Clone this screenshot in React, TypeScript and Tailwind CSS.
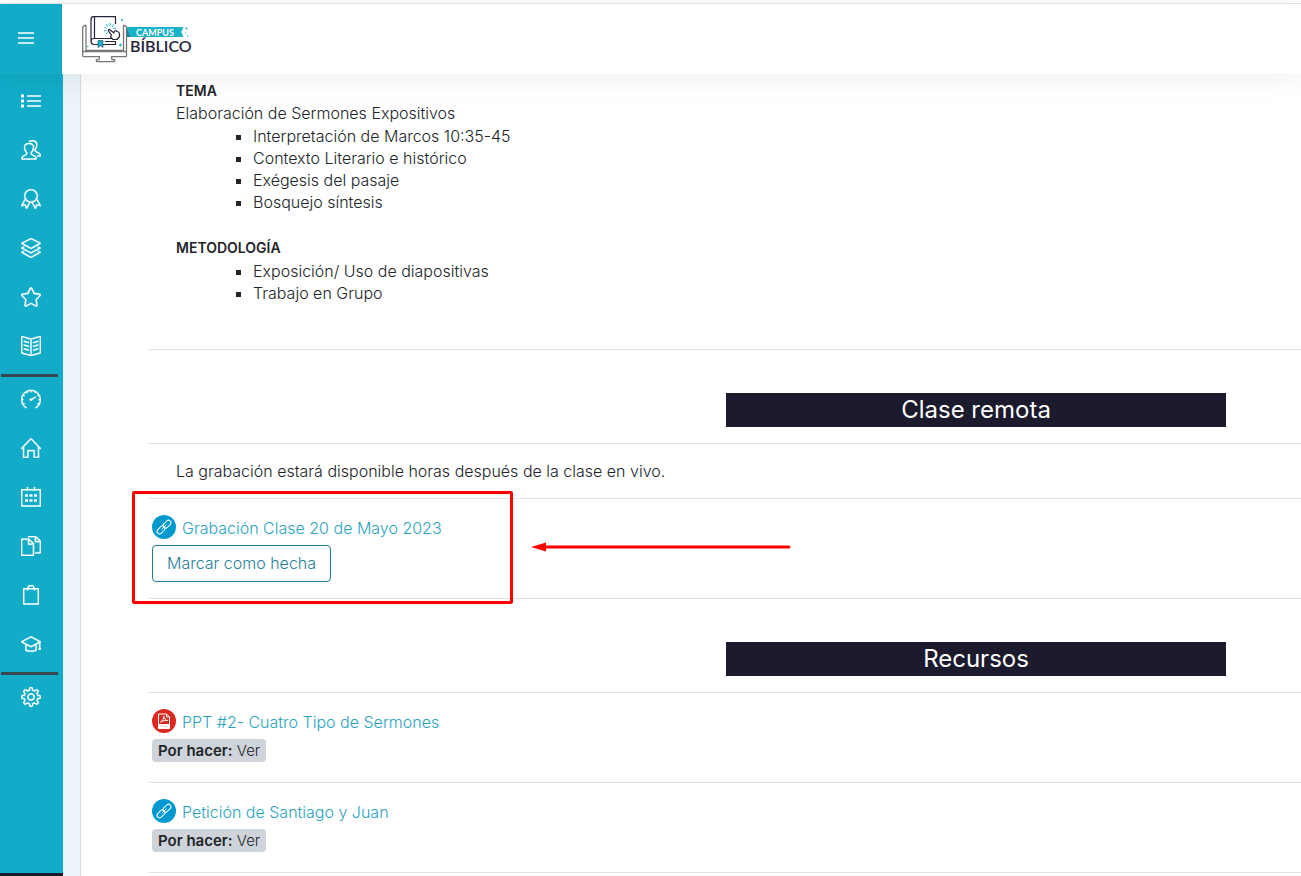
import type { ReactNode } from "react";
import { SlLayers, SlGraduation, SlSettings, SlStar, SlBookOpen, SlSpeedometer, SlHome, SlBadge, SlDocs } from "react-icons/sl";

type NavItem = { label: string; icon: ReactNode };

const slIcon = "size-5 stroke-current stroke-[16px]";

function Icon({ children }: { children: ReactNode }) {
    return (
        <svg viewBox="0 0 20 20" className="size-5" fill="none" stroke="currentColor" strokeWidth="1.5" strokeLinejoin="round">
            {children}
        </svg>
    );
}

const courseNav: NavItem[] = [
    {
        label: "Secciones",
        icon: (
            <Icon>
                <path d="M6 5h14M6 10h14M6 15h14" />
                <path d="M0 5h3M0 10h3M0 15h3" strokeWidth="3" />
            </Icon>
        ),
    },
    {
        label: "Participantes",
        icon: (
            <Icon>
                <path d="M1 19v-1.500c1-2 5-2 5-4.500C4 11 3.500 9 3.500 7.500 3.500 5 5.500 3.500 8 3.500s4.500 1.500 4.500 4c0 1.500-.5 3.500-2.500 5.500 0 2.500 4 2.500 5 4.500V19z" />
                <path d="M8 1.500C9 .9 10 .7 11.500.7c2.500 0 4.300 1.500 4.300 4.300 0 1.800-.8 3.500-2 4.800 0 2.700 4.500 2.700 5.500 4.700v1.500H16" />
            </Icon>
        ),
    },
    { label: "Insignias", icon: <SlBadge className={slIcon} /> },
    { label: "Competencias", icon: <SlLayers className={slIcon} /> },
    { label: "Calificaciones", icon: <SlStar className={slIcon} /> },
    { label: "Contenido", icon: <SlBookOpen className={slIcon} /> },
];

const siteNav: NavItem[] = [
    { label: "Tablero", icon: <SlSpeedometer className={slIcon} /> },
    { label: "Inicio del sitio", icon: <SlHome className={slIcon} /> },
    {
        label: "Calendario",
        icon: (
            <Icon>
                <path d="M.7 2.700h18.600v16.300H.7zM6.500 0v4M13.500 0v4" />
                <path d="M4 8.500h3M8.500 8.500h3M13 8.500h3M4 13.500h3M8.500 13.500h3M13 13.500h3" strokeWidth="2.600" />
            </Icon>
        ),
    },
    { label: "Archivos privados", icon: <SlDocs className={slIcon} /> },
    {
        label: "Banco de contenido",
        icon: (
            <Icon>
                <path d="M2.700 3.700h14.600v15.300H2.700zM6.500 5.500v-2l1.500-2.700h4l1.500 2.700v2" />
            </Icon>
        ),
    },
    { label: "Mis cursos", icon: <SlGraduation className={slIcon} /> },
];

const settingsNav: NavItem[] = [{ label: "Configuración", icon: <SlSettings className={slIcon} /> }];

function NavGroup({ items }: { items: NavItem[] }) {
    return (
        <ul className="flex flex-col items-center gap-[29px] pr-0.5">
            {items.map((item) => (
                <li key={item.label}>
                    <a href="#" aria-label={item.label} className="block">
                        {item.icon}
                    </a>
                </li>
            ))}
        </ul>
    );
}

function Logo() {
    return (
        <svg viewBox="80 12 112 52" className="h-[52px] w-28" fill="none" role="img" aria-label="Campus Bíblico">
            <g stroke="#77777a" strokeWidth="1.300" strokeLinejoin="round">
                <path d="M86 28v-2.500h-1.500L82.700 27v28.500q0 1.200 1.200 1.200h15.600l-.5 3h-2.600v1.900h18.200v-1.900H112l-.5-3h13.800q1.200 0 1.200-1.200V27l-1.500-1.500h-1.500V28v22.500H86z" />
                <path d="M83 51.500h43" />
            </g>
            <g stroke="#25243b" strokeWidth="1.200" strokeLinejoin="round">
                <path d="M93.500 16.700h22V24M115.500 38v.5H94q-3 0-3 3t3 3h21.500v-3H105M91 41V19.500q0-2.800 2.500-2.800M94.500 17v21.500" />
                <path d="M109.500 29.500l4.500 3.500c-.5-2 2-3 3-1.500 2 0 3 2.500 2.500 5l-2.500 3h-4l-2.500-2.500 1-2-3-3.800q-.5-2 1-1.700z" fill="#fff" />
            </g>
            <path d="M98 40.500h5v7l-2.500-1.700-2.500 1.700z" fill="#18b2c8" stroke="#25243b" strokeWidth=".5" />
            <path d="M104.500 27l2 1M106.500 24l1.200 2.500M110 23v3M113.500 24.500l-1.500 2.500M104 31l2.500-.5M106 34l1.500-2M116 28l-2.500.7M93 20.500h.1M121 20h2M122 19v2M87 46.500h1.500M119 45h3M120.500 43.500v3" stroke="#18b2c8" strokeWidth="1" />
            <path d="M126.500 27H183l-.5 3-1.500 2 1.500 2 .5 3h-52z" fill="#18b2c8" />
            <path d="M127 28l4 9h-4z" fill="#0f8797" />
            <path d="M185.500 28.500h2M186.500 27.500v2M185 33h1M187 36h1.500" stroke="#18b2c8" strokeWidth="1" />
            <text x="136" y="35.500" fill="#fff" className="font-['Lato'] text-[9px] font-bold">CAMPUS</text>
            <text x="130" y="52" fill="#25243b" className="font-['Lato'] text-[16px] font-semibold">BÍBLICO</text>
        </svg>
    );
}

function LinkBadge() {
    return (
        <svg viewBox="0 0 24 24" className="size-6 shrink-0" fill="none" aria-hidden="true">
            <circle cx="12" cy="12" r="12" fill="#0099cf" />
            <g stroke="#fff" strokeWidth="1">
                <rect x="10.500" y="6.700" width="9" height="5" rx="2.500" transform="rotate(-45 15 9.200)" />
                <rect x="4.500" y="12.400" width="9" height="5" rx="2.500" transform="rotate(-45 9 14.900)" />
                <path d="M9.700 14.300l4.700-4.700" />
            </g>
        </svg>
    );
}

function PdfBadge() {
    return (
        <svg viewBox="0 0 24 24" className="size-6 shrink-0" fill="none" aria-hidden="true">
            <circle cx="12" cy="12" r="12" fill="#db2a20" />
            <path d="M6.500 5h8l3 3v11.500h-11z" stroke="#fff" />
            <path d="M14.500 5v3h3" stroke="#fff" />
            <path d="M6.500 15h11v4.500h-11z" fill="#fff" />
            <path d="M8.500 13c2-1 3.500-3.500 3.200-6 .3 2.500 1.800 4 4 4.500-2.500-.3-5 .2-7.200 1.500z" stroke="#fff" strokeWidth=".9" />
            <path d="M8.500 17.200h7" stroke="#db2a20" strokeWidth="1" strokeDasharray="1.600 .8" opacity=".4" />
        </svg>
    );
}

function Banner({ title }: { title: string }) {
    return (
        <div className="flex justify-end border-b border-[#dee2e6] pt-[43px] pr-[75px] pb-4">
            <h2 className="w-[500px] max-w-full bg-[#1b1b2d] text-center text-2xl leading-[34px] font-normal text-white">{title}</h2>
        </div>
    );
}

function Activity({ title, icon, children }: { title: string; icon: ReactNode; children: ReactNode }) {
    return (
        <div className="relative border-b border-[#dee2e6] px-[3px] py-4">
            <a href="#" className="flex w-fit items-end gap-1.5 text-[#2ba3bf]">
                {icon}
                <span>{title}</span>
            </a>
            {children}
        </div>
    );
}

function Todo() {
    return (
        <p className="mt-1.5 mb-1 w-fit rounded bg-[#ced4da] px-1.5 text-[15px] leading-[23px] text-[#212529]">
            <strong className="font-semibold">Por hacer:</strong> Ver
        </p>
    );
}

const heading = "text-[14px] leading-[22px] font-semibold";
const list = "mt-px list-[square] pl-[77px] marker:text-[#212529]";

export default function App() {
    return (
        <div className="flex h-screen flex-col overflow-hidden bg-white pt-[3px] font-['Inter',sans-serif] text-[16px] leading-[22px] font-light text-[#212529]">
            <header className="relative z-10 flex h-[71px] shrink-0 items-stretch border-t border-[#dee2e6] bg-white shadow-[0_2px_31px_rgba(0,0,0,0.08)]">
                <button type="button" aria-label="Menú" className="flex w-[62px] items-center justify-center bg-[#12acc8] pr-[10px] pb-[3px] text-white">
                    <svg viewBox="0 0 16 14" className="h-3.5 w-4" stroke="currentColor" strokeWidth="1.500">
                        <path d="M0 2h16M0 7h16M0 12h16" />
                    </svg>
                </button>
                <a href="#" className="ml-[18px] pt-2">
                    <Logo />
                </a>
            </header>

            <div className="flex min-h-0 flex-1">
                <nav className="flex w-[63px] shrink-0 flex-col border-b-[3px] border-[#1b1b2d] bg-[#12acc8] pt-[17px] text-white">
                    <NavGroup items={courseNav} />
                    <hr className="mt-[18px] mr-[5px] mb-3 ml-px border-t-[3px] border-[#37474f]" />
                    <NavGroup items={siteNav} />
                    <hr className="mt-[18px] mr-[5px] mb-3 ml-px border-t-[3px] border-[#37474f]" />
                    <NavGroup items={settingsNav} />
                </nav>

                <div className="min-w-0 flex-1 bg-[#ebf4f8] pl-[17px]">
                    <main className="min-h-full border-l border-[#d5dde0] bg-white pl-[68px]">
                        <section className="border-b border-[#dee2e6] pt-1.5 pb-[45px] pl-[27px]">
                            <h3 className={heading}>TEMA</h3>
                            <p>Elaboración de Sermones Expositivos</p>
                            <ul className={list}>
                                <li>Interpretación de Marcos 10:35-45</li>
                                <li>Contexto Literario e histórico</li>
                                <li>Exégesis del pasaje</li>
                                <li>Bosquejo síntesis</li>
                            </ul>
                            <h3 className={`mt-6 ${heading}`}>METODOLOGÍA</h3>
                            <ul className={list}>
                                <li>Exposición/ Uso de diapositivas</li>
                                <li>Trabajo en Grupo</li>
                            </ul>
                        </section>

                        <Banner title="Clase remota" />
                        <p className="border-b border-[#dee2e6] py-4 pl-[27px]">La grabación estará disponible horas después de la clase en vivo.</p>
                        <Activity title="Grabación Clase 20 de Mayo 2023" icon={<LinkBadge />}>
                            <button type="button" className="mt-1.5 block rounded border border-[#1f7e9a] px-3.5 py-1.5 leading-[23px] text-[#1f7e9a]">
                                Marcar como hecha
                            </button>
                            <div className="absolute -top-2 -left-[17px] h-[113px] w-[381px] rounded-xs border-[3px] border-[#ff0000]" />
                            <svg viewBox="0 0 260 10" className="absolute top-[43px] left-[382px] h-2.5 w-[260px]" fill="#ff0000">
                                <path d="M0 5L15 .5v3h243q1.500 0 1.500 1.500T258 6.500H15v3z" />
                            </svg>
                        </Activity>

                        <Banner title="Recursos" />
                        <Activity title="PPT #2- Cuatro Tipo de Sermones" icon={<PdfBadge />}>
                            <Todo />
                        </Activity>
                        <Activity title="Petición de Santiago y Juan" icon={<LinkBadge />}>
                            <Todo />
                        </Activity>
                    </main>
                </div>
            </div>
        </div>
    );
}
